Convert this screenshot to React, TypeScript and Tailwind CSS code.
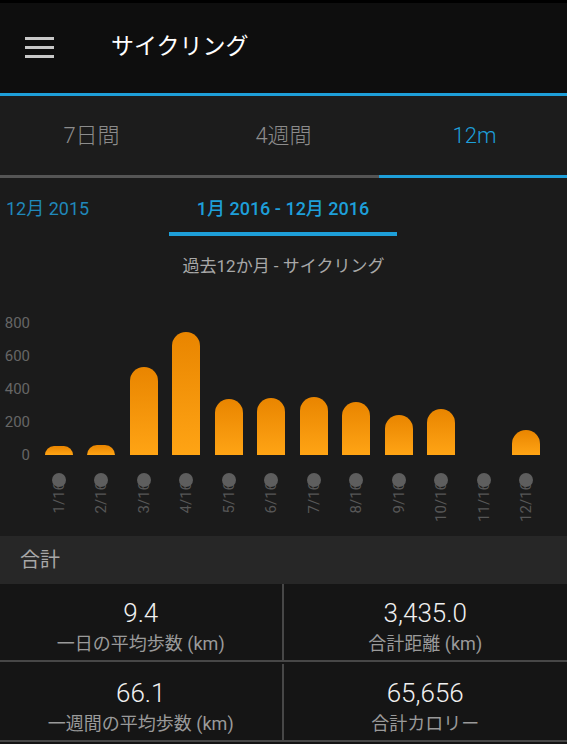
import React from 'react';

interface MonthBar {
  label: string;
  km: number;
}

const months: MonthBar[] = [
  { label: '1/16', km: 55 },
  { label: '2/16', km: 61 },
  { label: '3/16', km: 533 },
  { label: '4/16', km: 745 },
  { label: '5/16', km: 339 },
  { label: '6/16', km: 345 },
  { label: '7/16', km: 352 },
  { label: '8/16', km: 321 },
  { label: '9/16', km: 242 },
  { label: '10/16', km: 279 },
  { label: '11/16', km: 0 },
  { label: '12/16', km: 152 },
];

// 33px per 200 km on the axis
const PX_PER_KM = 33 / 200;

const stats = [
  { value: '9.4', label: '一日の平均歩数', unit: ' (km)' },
  { value: '3,435.0', label: '合計距離', unit: ' (km)' },
  { value: '66.1', label: '一週間の平均歩数', unit: ' (km)' },
  { value: '65,656', label: '合計カロリー', unit: '' },
];

const App: React.FC = () => {
  return (
    <div className="w-[567px] h-[744px] overflow-hidden bg-[#1b1b1b] font-['Roboto','Noto_Sans_CJK_JP',sans-serif] flex flex-col">
      {/* top bar */}
      <div className="h-[3px] bg-black" />
      <header className="h-[90px] bg-[#0e0e0e] flex items-center">
        <div className="ml-[25px] w-[29px] flex flex-col gap-[6px] -mt-[1px]">
          <span className="h-[3px] bg-[#c8c8c8]" />
          <span className="h-[3px] bg-[#c8c8c8]" />
          <span className="h-[3px] bg-[#c8c8c8]" />
        </div>
        <h1 className="ml-[57px] text-[23px] leading-7 text-white -mt-[2px]">サイクリング</h1>
      </header>
      <div className="h-[3px] bg-[#1e9fd9]" />

      {/* range tabs */}
      <nav className="h-[79px] grid grid-cols-3 items-center text-[22px] font-light bg-[#1c1c1c]">
        <span className="text-center text-[#8c8c8c] -ml-[6px]">7日間</span>
        <span className="text-center text-[#8c8c8c]">4週間</span>
        <span className="text-center text-[#1e9fd9] ml-[4px]">12m</span>
      </nav>
      <div className="h-[3px] flex">
        <div className="w-[379px] bg-[#555555]" />
        <div className="flex-1 bg-[#1e9fd9]" />
      </div>

      {/* period selector */}
      <div className="h-[59px] flex text-[18px] leading-[22px]">
        <div className="w-[169px] pl-[6px] pt-[20px] text-[#2088ba]">12月 2015</div>
        <div className="w-[228px] flex flex-col items-center pt-[20px]">
          <span className="font-medium text-[#1e9fd9]">1月 2016 - 12月 2016</span>
          <span className="mt-[12px] h-[4px] w-full bg-[#1e9fd9]" />
        </div>
      </div>

      {/* chart */}
      <section className="h-[299px] flex flex-col">
        <p className="mt-[18px] text-center text-[17px] leading-[22px] text-[#a8a8a8]">過去12か月 - サイクリング</p>
        <div className="mt-[38px] flex h-[148px]">
          <div className="w-[30px] flex flex-col gap-[17px] text-right text-[15px] leading-4 text-[#666666]">
            <span>800</span>
            <span>600</span>
            <span>400</span>
            <span>200</span>
            <span>0</span>
          </div>
          <div className="ml-[7.5px] flex">
            {months.map((m) => (
              <div key={m.label} className="w-[42.5px] flex flex-col items-center justify-end pb-[8px]">
                {m.km > 0 && (
                  <div
                    className="w-[28px] rounded-t-[14px] bg-linear-to-b from-[#e98500] to-[#ffa414]"
                    style={{ height: Math.round(m.km * PX_PER_KM) }}
                  />
                )}
              </div>
            ))}
          </div>
        </div>
        <div className="ml-[37.5px] flex mt-[10px]">
          {months.map((m) => (
            <div key={m.label} className="w-[42.5px] flex flex-col items-center">
              <span className="relative z-10 w-[14px] h-[14px] rounded-full bg-[#5e5e5e]" />
              <span className="-mt-[5px] [writing-mode:vertical-rl] rotate-180 text-[15px] leading-4 text-[#575757]">
                {m.label}
              </span>
            </div>
          ))}
        </div>
      </section>

      {/* totals */}
      <div className="h-[48px] bg-[#272727] flex items-center pl-[20px] text-[20px] text-[#a8a8a8]">合計</div>
      <div className="grid grid-cols-2 flex-1 bg-[#151515]">
        {stats.map((s, i) => (
          <div
            key={s.label}
            className={`h-[78px] flex flex-col items-center pt-[14px] border-b-2 border-[#474747] ${i % 2 === 0 ? 'border-r-2' : ''}`}
          >
            <span className="text-[26px] leading-[30px] font-light text-[#f0f0f0]">{s.value}</span>
            <span className="mt-[4px] text-[18px] leading-6 text-[#9a9a9a]">
              {s.label}
              {s.unit}
            </span>
          </div>
        ))}
      </div>
    </div>
  );
};

export default App;
